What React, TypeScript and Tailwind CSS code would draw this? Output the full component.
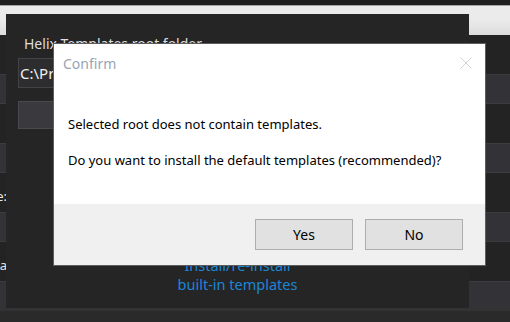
const Row = ({ label }: { label?: string }) => (
  <div className="flex flex-col">
    <div className="h-[39px] flex items-center pt-[8px]">
      {label && (
        <div className="w-[7px] overflow-hidden flex justify-end whitespace-nowrap text-[13px] text-[#e6e6e6]">
          {label}
        </div>
      )}
    </div>
    <div className="h-[30px] bg-[#333337] border-y border-[#3c3c40]" />
  </div>
);

export default function App() {
  return (
    <div
      className="relative w-[510px] h-[322px] overflow-hidden bg-[#232323]"
      style={{ fontFamily: '"Noto Sans", "Open Sans", sans-serif' }}
    >
      {/* background app window */}
      <div className="flex flex-col h-full">
        <div className="h-[5px] bg-[#1f1f1f]" />
        <div className="h-px bg-[#a3a3a3]" />
        <div className="h-[29px] bg-gradient-to-b from-[#ececec] via-[#eaeaea] to-[#dcdcdc]" />
        <div className="flex-1 flex flex-col">
          <Row />
          <Row />
          <Row label="Theme:" />
          <Row label="Data" />
        </div>
        <div className="absolute left-0 right-0 bottom-0 h-[14px] bg-[#2a2a2a] border-t-[3px] border-[#333333]" />
      </div>

      {/* settings window */}
      <div className="absolute left-[6px] top-[14px] w-[463px] h-[294px] bg-[#252526] flex flex-col px-[12px]">
        <div className="mt-[20px] pl-[6px] text-[14px] text-[#dedede] leading-[20px]">
          Helix Templates root folder
        </div>
        <div className="mt-[4px] h-[30px] w-[420px] bg-[#2d2d30] border border-[#434346] flex items-center px-[1px] text-[15px] text-[#f0f0f0]">
          C:\Program Files\Helix Toolkit\Templates
        </div>
        <div className="mt-[13px] h-[28px] w-[120px] bg-[#3a3a3e] border border-[#4a4a4e]" />
        <div className="mt-auto mb-[14px] self-center text-center text-[14.5px] leading-[19px] text-[#1c86d6]">
          Install/re-install
          <br />
          built-in templates
        </div>
      </div>

      {/* confirm dialog */}
      <div className="absolute left-[53px] top-[43px] w-[433px] h-[223px] bg-white border border-[#5c5c5c] flex flex-col">
        <div className="h-[38px] flex items-center justify-between pl-[9px] pr-[13px]">
          <span className="text-[14px] text-[#98a4b6]">Confirm</span>
          <svg width="12" height="12" viewBox="0 0 12 12" className="text-[#d4d4d4]">
            <path d="M0.5 0.5 L11.5 11.5 M11.5 0.5 L0.5 11.5" stroke="currentColor" strokeWidth="1" fill="none" />
          </svg>
        </div>
        <div className="flex-1 pl-[14px] pt-[33px] text-[13px] text-black leading-[18px] flex flex-col gap-[18px]">
          <div>Selected root does not contain templates.</div>
          <div>Do you want to install the default templates (recommended)?</div>
        </div>
        <div className="h-[61px] bg-[#f0f0f0] flex justify-end items-start pt-[15px] pr-[22px] gap-[12px]">
          <button className="w-[98px] h-[31px] bg-[#e1e1e1] border border-[#adadad] text-[14px] text-black">
            Yes
          </button>
          <button className="w-[98px] h-[31px] bg-[#e1e1e1] border border-[#adadad] text-[14px] text-black">
            No
          </button>
        </div>
      </div>
    </div>
  );
}
